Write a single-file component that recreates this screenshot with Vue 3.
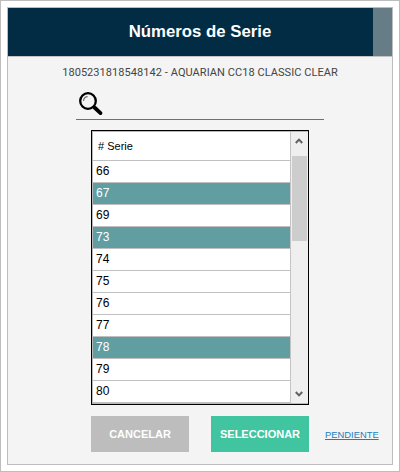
<script setup>
const rows = [
  { n: 66 }, { n: 67, on: true }, { n: 69 }, { n: 73, on: true }, { n: 74 }, { n: 75 },
  { n: 76 }, { n: 77 }, { n: 78, on: true }, { n: 79 }, { n: 80 }
]
</script>

<template>
  <div class="window">
    <div class="dialog">
      <header class="head">
        <h1>Números de Serie</h1>
        <div class="head-side"></div>
      </header>

      <p class="product">1805231818548142 - AQUARIAN CC18 CLASSIC CLEAR</p>

      <div class="search">
        <svg width="25" height="25" viewBox="0 0 25 25">
          <circle cx="9" cy="9" r="7.8" fill="none" stroke="#000" stroke-width="2.3" />
          <path d="M4.6 9a4.4 4.4 0 0 1 4-4.4" fill="none" stroke="#666" stroke-width="1.1" />
          <path d="M15.5 15.5l6 5.6" fill="none" stroke="#000" stroke-width="3.8" stroke-linecap="round" />
        </svg>
      </div>

      <div class="list">
        <div class="rows">
          <div class="row-head"># Serie</div>
          <div v-for="r in rows" :key="r.n" class="row" :class="{ on: r.on }">{{ r.n }}</div>
        </div>
        <div class="scroll">
          <svg class="arrow" width="8" height="6" viewBox="0 0 8 6"><path d="M0.8 5L4 1.6 7.2 5" fill="none" stroke="#606060" stroke-width="2" /></svg>
          <div class="thumb"></div>
          <svg class="arrow down" width="8" height="6" viewBox="0 0 8 6"><path d="M0.8 1L4 4.4 7.2 1" fill="none" stroke="#606060" stroke-width="2" /></svg>
        </div>
      </div>

      <div class="actions">
        <button class="btn cancel">CANCELAR</button>
        <button class="btn select">SELECCIONAR</button>
        <a class="pending" href="#">PENDIENTE</a>
      </div>
    </div>
  </div>
</template>

<style scoped>
.window {
  box-sizing: border-box;
  width: 400px;
  height: 472px;
  padding: 6px;
  background: #fff;
  border: 1px solid #bdbdbd;
}

.dialog {
  box-sizing: border-box;
  width: 386px;
  height: 458px;
  background: #f4f4f4;
  border: 1px solid #bdbdbd;
  display: flex;
  flex-direction: column;
  align-items: center;
}

.head {
  width: 100%;
  height: 48px;
  flex: none;
  display: flex;
  background: #022c43;
  border-bottom: 1px solid #c4c4c4;
  box-sizing: content-box;
}

.head h1 {
  flex: 1;
  margin: 0;
  padding-left: 19px;
  text-align: center;
  font: bold 16.8px/48px "Liberation Sans", Arial, sans-serif;
  color: #fff;
}

.head-side {
  width: 19px;
  background: #667c87;
}

.product {
  margin: 8px 0 0;
  font: 11px/16px Roboto, Arial, sans-serif;
  letter-spacing: 0.06px;
  color: #444;
}

.search {
  box-sizing: border-box;
  width: 248px;
  height: 33px;
  margin-top: 6px;
  padding: 5px 0 0 3px;
  border-bottom: 1px solid #707070;
}

.search svg {
  display: block;
}

.list {
  box-sizing: border-box;
  width: 218px;
  height: 275px;
  margin-top: 10px;
  padding: 1px 0 1px 1px;
  display: flex;
  background: #b8b8b8;
  border: 1px solid #000;
}

.rows {
  width: 197px;
  background: #fff;
  border-right: 1px solid #c4c4c4;
  overflow: hidden;
  font-family: "Liberation Sans", Arial, sans-serif;
  font-size: 12px;
  color: #000;
}

.row-head {
  box-sizing: border-box;
  height: 29px;
  padding-left: 5px;
  line-height: 28px;
  font-size: 11px;
  border-bottom: 1px solid #c0c0c0;
}

.row {
  box-sizing: border-box;
  height: 22px;
  padding-left: 3px;
  line-height: 21px;
  border-bottom: 1px solid #c0c0c0;
}

.row.on {
  background: #609ea2;
  color: #fff;
}

.scroll {
  position: relative;
  flex: 1;
  background: #efefef;
}

.thumb {
  position: absolute;
  top: 24px;
  left: 1px;
  width: 15px;
  height: 85px;
  background: #cdcdcd;
}

.arrow {
  position: absolute;
  top: 6px;
  left: 4px;
}

.arrow.down {
  top: auto;
  bottom: 6px;
}

.actions {
  align-self: flex-start;
  margin: 11px 0 0 83px;
  display: flex;
  align-items: center;
}

.btn {
  flex: none;
  width: 98px;
  height: 36px;
  padding: 0;
  border: 0;
  color: #fff;
  font: bold 11px "Liberation Sans", Arial, sans-serif;
}

.cancel {
  background: #bdbdbd;
}

.select {
  margin-left: 22px;
  background: #41c5a0;
}

.pending {
  margin-left: 16px;
  font: 9.4px "Liberation Sans", Arial, sans-serif;
  color: #1a7fbf;
}
</style>

<style>
body {
  margin: 0;
}
</style>
